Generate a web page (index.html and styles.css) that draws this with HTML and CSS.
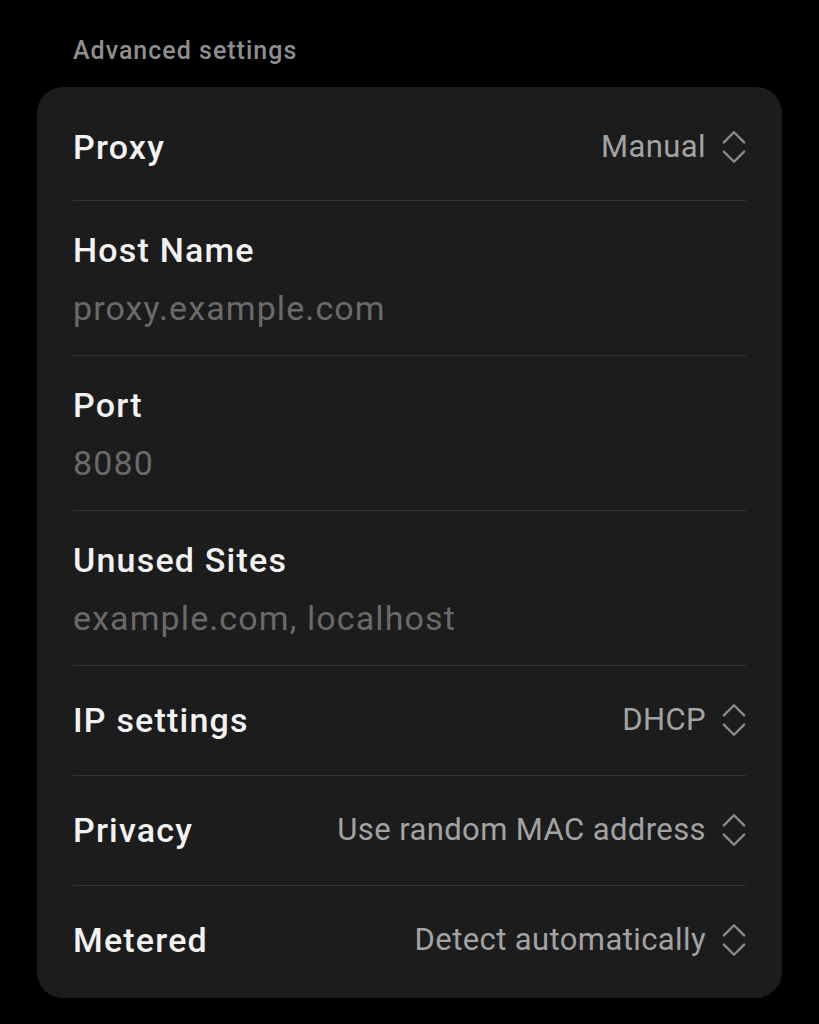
FILE: index.html
```html
<!DOCTYPE html>
<html>
<head>
<meta charset="utf-8">
<link rel="stylesheet" href="styles.css">
</head>
<body>
<div class="page">
  <div class="section-title">Advanced settings</div>
  <div class="card">
    <div class="row first">
      <div class="title">Proxy</div>
      <div class="value">Manual
        <svg class="updown" viewBox="0 0 26 36"><path d="M2 13 L13 2 L24 13 M2 23 L13 34 L24 23"/></svg>
      </div>
    </div>
    <div class="divider"></div>
    <div class="row stack">
      <div class="title">Host Name</div>
      <div class="sub">proxy.example.com</div>
    </div>
    <div class="divider"></div>
    <div class="row stack">
      <div class="title">Port</div>
      <div class="sub">8080</div>
    </div>
    <div class="divider"></div>
    <div class="row stack">
      <div class="title">Unused Sites</div>
      <div class="sub">example.com, localhost</div>
    </div>
    <div class="divider"></div>
    <div class="row">
      <div class="title">IP settings</div>
      <div class="value">DHCP
        <svg class="updown" viewBox="0 0 26 36"><path d="M2 13 L13 2 L24 13 M2 23 L13 34 L24 23"/></svg>
      </div>
    </div>
    <div class="divider"></div>
    <div class="row">
      <div class="title">Privacy</div>
      <div class="value">Use random MAC address
        <svg class="updown" viewBox="0 0 26 36"><path d="M2 13 L13 2 L24 13 M2 23 L13 34 L24 23"/></svg>
      </div>
    </div>
    <div class="divider"></div>
    <div class="row last">
      <div class="title">Metered</div>
      <div class="value">Detect automatically
        <svg class="updown" viewBox="0 0 26 36"><path d="M2 13 L13 2 L24 13 M2 23 L13 34 L24 23"/></svg>
      </div>
    </div>
  </div>
</div>
</body>
</html>
```
FILE: styles.css
```css
html, body {
  margin: 0;
  padding: 0;
  background: #000;
}
body {
  font-family: Roboto, "Noto Sans", "Liberation Sans", sans-serif;
  width: 819px;
  height: 1024px;
  overflow: hidden;
}
.page {
  padding: 35px 37px 0 37px;
}
.section-title {
  padding-left: 36px;
  font-size: 25px;
  letter-spacing: 1px;
  line-height: 32px;
  font-weight: 500;
  color: #8e8e8e;
}
.card {
  margin-top: 20px;
  width: 745px;
  background: #1c1c1c;
  border-radius: 26px;
}
.row {
  display: flex;
  align-items: center;
  justify-content: space-between;
  padding: 34px 36px 35px 36px;
}
.row.first { padding-top: 40px; padding-bottom: 33px; }
.row.last { padding-bottom: 38px; }
.row.stack {
  flex-direction: column;
  align-items: flex-start;
  justify-content: flex-start;
  gap: 18px;
  padding: 29px 36px 27px 36px;
}
.title {
  font-size: 34px;
  letter-spacing: 1.2px;
  line-height: 40px;
  font-weight: 500;
  color: #f2f2f2;
}
.sub {
  font-size: 34px;
  letter-spacing: 1.1px;
  line-height: 40px;
  color: #6a6a6a;
}
.value {
  display: flex;
  align-items: center;
  gap: 16px;
  font-size: 31px;
  letter-spacing: 0.4px;
  line-height: 40px;
  color: #a3a3a3;
}
.updown {
  width: 24px;
  height: 34px;
  fill: none;
  stroke: #8a8a8a;
  stroke-width: 2.6;
  stroke-linecap: round;
  stroke-linejoin: round;
}
.divider {
  height: 1px;
  margin: 0 36px;
  background: #333;
}
```
